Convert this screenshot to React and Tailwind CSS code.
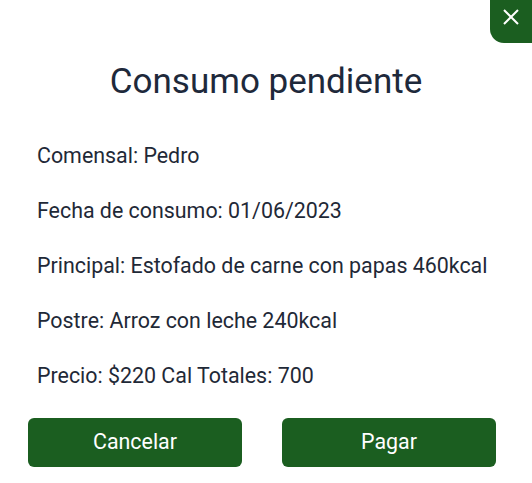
export default function App() {
  const rows = [
    'Comensal: Pedro',
    'Fecha de consumo: 01/06/2023',
    'Principal: Estofado de carne con papas 460kcal',
    'Postre: Arroz con leche 240kcal',
    'Precio: $220 Cal Totales: 700',
  ]

  return (
    <div className="relative w-[532px] h-[483px] bg-white overflow-hidden" style={{ fontFamily: 'Roboto, sans-serif' }}>
      {/* Close */}
      <button className="absolute top-0 right-0 w-[42px] h-[43px] bg-[#1b5e20] rounded-bl-[14px]">
        <svg className="absolute left-[13px] top-[9px]" width="16" height="16" viewBox="0 0 16 16" fill="none" stroke="white" strokeWidth="2">
          <path d="M1 1L15 15M15 1L1 15" />
        </svg>
      </button>

      <h2 className="pt-[61px] text-center text-[35px] leading-[42px] text-[#1e293b]">Consumo pendiente</h2>

      <div className="mt-[39px] pl-[37px] flex flex-col gap-[28px]">
        {rows.map(r => (
          <p key={r} className="text-[21.4px] leading-[27px] text-[#1f2937]">{r}</p>
        ))}
      </div>

      <div className="mt-[29px] flex gap-[40px] px-[28px]">
        <button className="w-[214px] h-[49px] rounded-[6px] bg-[#1b5e20] text-white text-[21.4px]">Cancelar</button>
        <button className="w-[214px] h-[49px] rounded-[6px] bg-[#1b5e20] text-white text-[21.4px]">Pagar</button>
      </div>
    </div>
  )
}
